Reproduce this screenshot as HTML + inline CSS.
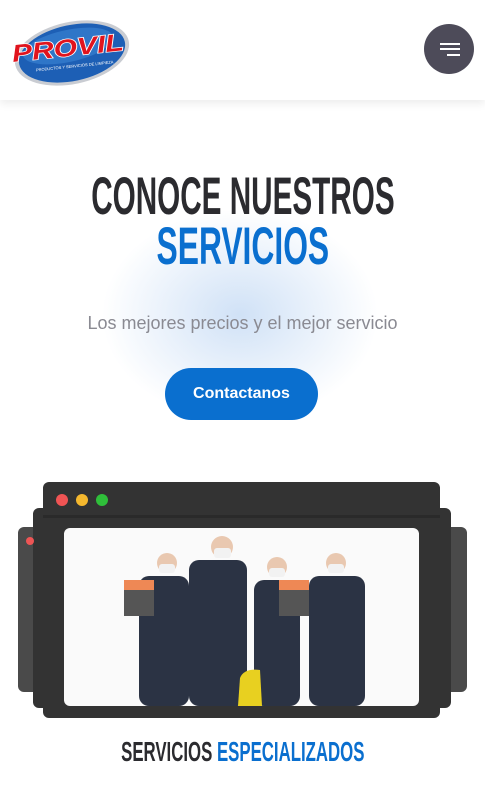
<!DOCTYPE html>
<html><head><meta charset="utf-8"><style>
*{margin:0;padding:0;box-sizing:border-box}
body{width:485px;height:790px;overflow:hidden;background:#fff;font-family:"Liberation Sans",sans-serif;position:relative}
.hdr{position:absolute;left:0;top:0;width:485px;height:100px;background:#fff;box-shadow:0 4px 8px rgba(0,0,0,.07)}
.menu{position:absolute;left:424px;top:24px;width:50px;height:50px;border-radius:50%;background:#4d4b59}
.menu i{position:absolute;height:2px;background:#fff;right:14px}
.glow{position:absolute;left:90px;top:200px;width:300px;height:230px;border-radius:50%;background:radial-gradient(ellipse at center,rgba(120,170,230,.35),rgba(255,255,255,0) 65%)}
.h{position:absolute;left:-300px;width:1085px;text-align:center;white-space:nowrap;font-weight:bold;font-size:53px;line-height:50px}
.h span.s{display:inline-block;transform:scaleX(.6);transform-origin:center}
.sub{position:absolute;top:313px;left:0;width:485px;text-align:center;color:#8a8a92;font-size:18px}
.btn{position:absolute;left:165px;top:368px;width:153px;height:52px;border-radius:26px;background:#0a6fcf;color:#fff;font-weight:bold;font-size:16px;text-align:center;line-height:52px}
.win{position:absolute;border-radius:6px}
</style></head><body>
<div class="glow"></div>
<div class="hdr">
<svg style="position:absolute;left:8px;top:10px" width="124" height="78" viewBox="0 0 124 78">
<ellipse cx="64" cy="43" rx="58" ry="31" transform="rotate(-12 64 43)" fill="#c9ccd2"/>
<ellipse cx="64" cy="43" rx="54" ry="28" transform="rotate(-12 64 43)" fill="#1d5fb5"/>
<ellipse cx="60" cy="36" rx="46" ry="16" transform="rotate(-12 60 36)" fill="#3c86d6" opacity=".6"/>
<text x="4" y="46" font-family="Liberation Sans" font-weight="bold" font-style="italic" font-size="24" fill="#e0141e" stroke="#fff" stroke-width="1.5" paint-order="stroke" transform="rotate(-6 60 40)" textLength="112" lengthAdjust="spacingAndGlyphs">PROVIL</text>
<text x="26" y="58" font-family="Liberation Sans" font-size="4" fill="#fff" transform="rotate(-6 60 40)">PRODUCTOS Y SERVICIOS DE LIMPIEZA</text>
</svg>
<div class="menu"><i style="top:19px;width:20px"></i><i style="top:24px;width:20px"></i><i style="top:30px;width:13px"></i></div>
</div>
<div class="h" style="top:172px;color:#2b2b2f"><span class="s" style="transform:scaleX(.56)">CONOCE NUESTROS</span></div>
<div class="h" style="top:222px;color:#0a6fcf"><span class="s">SERVICIOS</span></div>
<div class="sub">Los mejores precios y el mejor servicio</div>
<div class="btn">Contactanos</div>

<div class="win" style="left:18px;top:527px;width:449px;height:165px;background:#4a4a4a"></div>
<div class="win" style="left:33px;top:508px;width:418px;height:200px;background:#333"></div>
<div style="position:absolute;left:26px;top:537px;width:8px;height:8px;border-radius:50%;background:#e55"></div>
<div class="win" style="left:43px;top:482px;width:397px;height:236px;background:#333"></div>
<div style="position:absolute;left:43px;top:515px;width:397px;height:3px;background:#2a2a2a"></div>
<div style="position:absolute;left:56px;top:494px;width:12px;height:12px;border-radius:50%;background:#f05454"></div>
<div style="position:absolute;left:76px;top:494px;width:12px;height:12px;border-radius:50%;background:#f5b82e"></div>
<div style="position:absolute;left:96px;top:494px;width:12px;height:12px;border-radius:50%;background:#2fbf3a"></div>
<div style="position:absolute;left:64px;top:528px;width:355px;height:178px;border-radius:6px;background:#fafafa;overflow:hidden">
<svg width="355" height="178" viewBox="0 0 355 178">
<g fill="#2b3344">
<rect x="75" y="48" width="50" height="130" rx="10"/>
<rect x="125" y="32" width="58" height="146" rx="10"/>
<rect x="190" y="52" width="46" height="126" rx="10"/>
<rect x="245" y="48" width="56" height="130" rx="10"/>
</g>
<g fill="#e9c8b0"><circle cx="103" cy="35" r="10"/><circle cx="158" cy="19" r="11"/><circle cx="213" cy="39" r="10"/><circle cx="272" cy="35" r="10"/></g>
<g fill="#f2f2f2"><rect x="95" y="36" width="16" height="9" rx="3"/><rect x="150" y="20" width="17" height="10" rx="3"/><rect x="205" y="40" width="16" height="9" rx="3"/><rect x="264" y="36" width="16" height="9" rx="3"/></g>
<rect x="60" y="62" width="30" height="26" fill="#555"/><rect x="60" y="52" width="30" height="10" fill="#e85"/>
<rect x="215" y="62" width="30" height="26" fill="#555"/><rect x="215" y="52" width="30" height="10" fill="#e85"/>
<path d="M174 178 L176 150 Q180 140 196 142 L198 178Z" fill="#e8d020"/>
</svg>
</div>
<div class="h" style="top:737px;font-size:28px;line-height:30px;color:#2b2b2f"><span class="s">SERVICIOS <span style="color:#0a6fcf">ESPECIALIZADOS</span></span></div>
</body></html>
